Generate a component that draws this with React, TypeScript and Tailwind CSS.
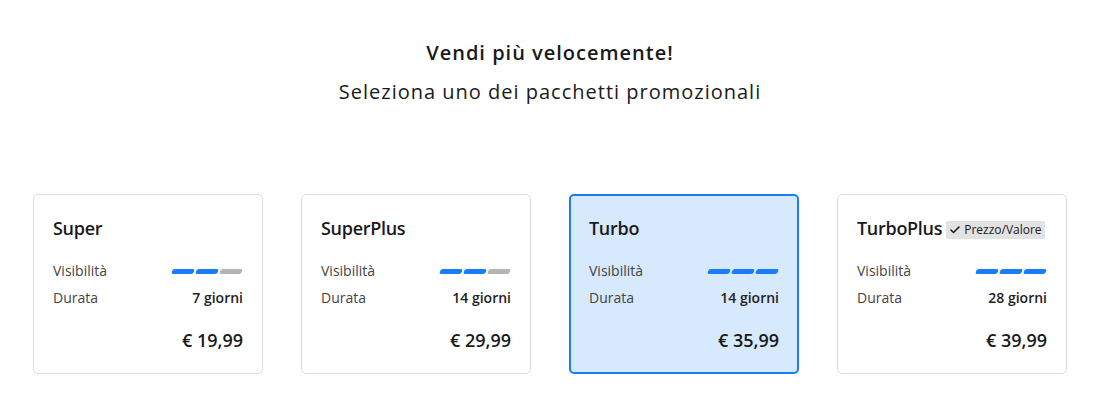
import { Check } from "lucide-react";

const packages = [
  { name: "Super", level: 2, days: "7 giorni", price: "€ 19,99" },
  { name: "SuperPlus", level: 2, days: "14 giorni", price: "€ 29,99" },
  { name: "Turbo", level: 3, days: "14 giorni", price: "€ 35,99", selected: true },
  { name: "TurboPlus", level: 3, days: "28 giorni", price: "€ 39,99", badge: "Prezzo/Valore" },
];

function Bars({ level }: { level: number }) {
  return (
    <div className="flex gap-[2px] pr-[1px]">
      {[0, 1, 2].map((i) => (
        <span
          key={i}
          className={`block h-[5px] w-[22px] -skew-x-[20deg] rounded-[2px] ${
            i < level ? "bg-[#1a7cfb]" : "bg-[#b4b4b4]"
          }`}
        />
      ))}
    </div>
  );
}

export default function App() {
  return (
    <div
      className="h-[407px] w-[1100px] bg-white text-[#1a1a1a]"
      style={{ fontFamily: "'Open Sans', Lato, sans-serif" }}
    >
      <div className="flex flex-col items-center pt-[39px]">
        <h1 className="text-[20px] font-semibold leading-[28px] tracking-[1px]">Vendi più velocemente!</h1>
        <p className="mt-[11px] text-[20px] leading-[28px] tracking-[1px]">Seleziona uno dei pacchetti promozionali</p>
      </div>
      <div className="mt-[88px] grid grid-cols-4 gap-[38px] px-[33px]">
        {packages.map((p) => (
          <div
            key={p.name}
            className={`flex h-[180px] flex-col rounded-[5px] ${
              p.selected
                ? "border-2 border-[#1a7cfb] bg-[#d6e9fd] px-[18px] pt-[20px]"
                : "border border-[#dcdcdc] bg-white px-[19px] pt-[21px]"
            }`}
          >
            <div className="flex items-end gap-[4px]">
              <span className="text-[18px] font-semibold leading-[24px] tracking-[-0.3px]">{p.name}</span>
              {p.badge && (
                <span className="mb-[1px] flex items-center gap-[3px] whitespace-nowrap rounded-[2px] bg-[#e2e2e2] px-[3px] py-[2px] text-[12px] leading-[14px]">
                  <Check size={12} strokeWidth={3.2} />
                  {p.badge}
                </span>
              )}
            </div>
            <div className="mt-[22px] flex items-center justify-between text-[14px] leading-[18px]">
              <span className="text-[#444]">Visibilità</span>
              <Bars level={p.level} />
            </div>
            <div className="mt-[9px] flex items-center justify-between text-[14px] leading-[18px]">
              <span className="text-[#444]">Durata</span>
              <span className="font-semibold text-[#222]">{p.days}</span>
            </div>
            <div className="mt-[21px] text-right text-[18px] font-semibold leading-[24px]">{p.price}</div>
          </div>
        ))}
      </div>
    </div>
  );
}
